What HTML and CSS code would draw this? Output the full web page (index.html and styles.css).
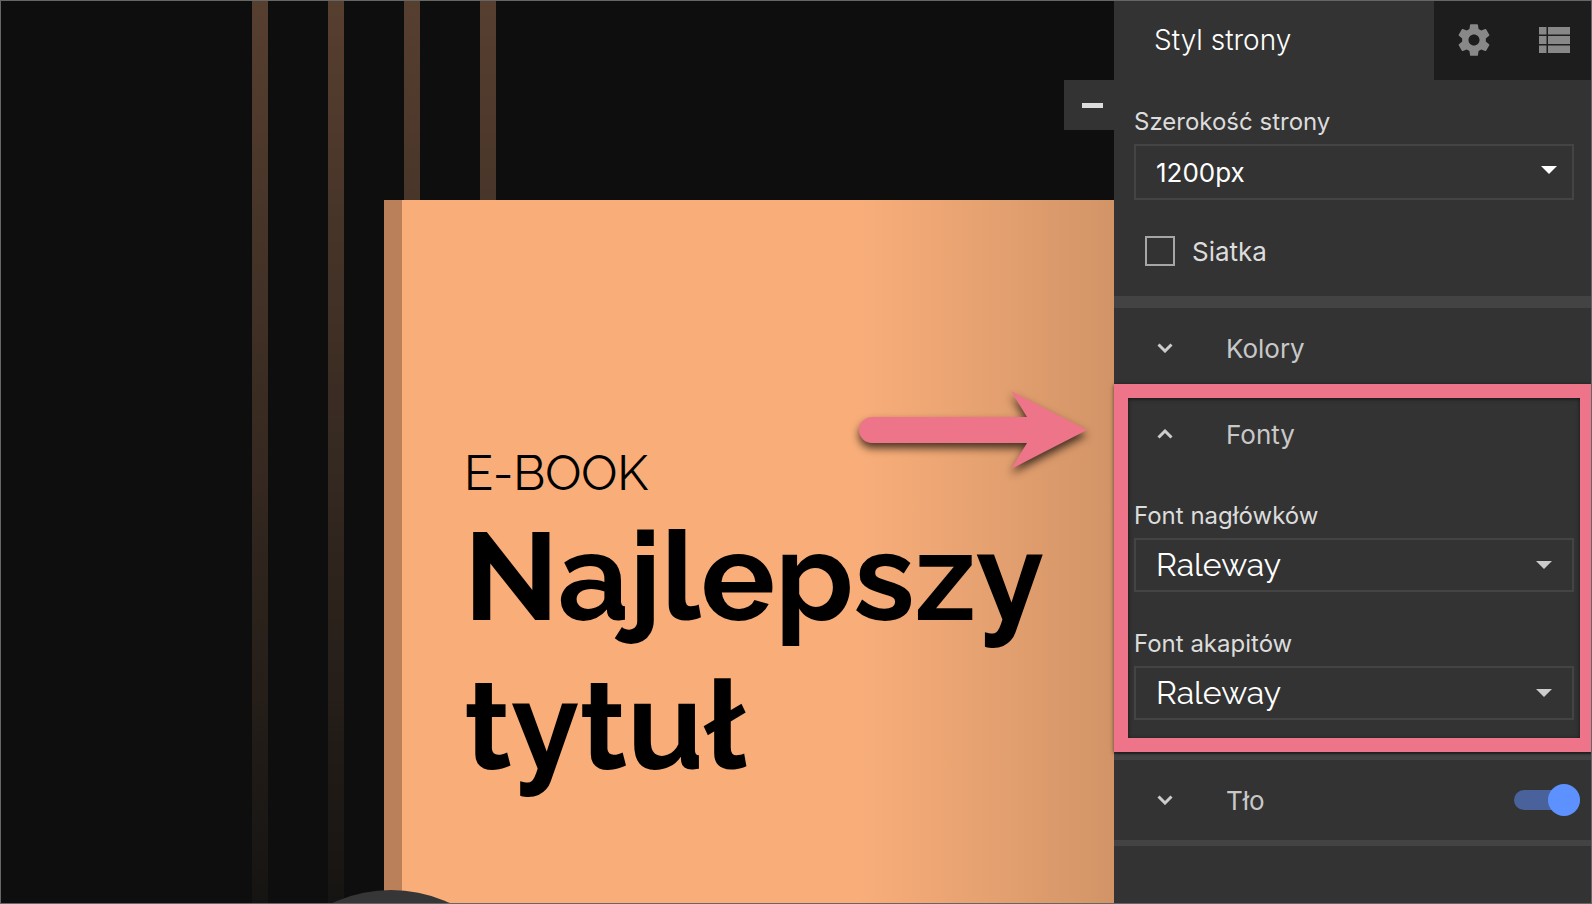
FILE: index.html
```html
<!DOCTYPE html>
<html lang="pl">
<head>
  <meta charset="utf-8">
  <title>Styl strony</title>
  <link rel="stylesheet" href="styles.css">
</head>
<body>
  <div class="editor">
    <main class="canvas">
      <div class="stripes">
        <span></span><span></span><span></span><span></span>
      </div>
      <article class="cover">
        <p class="cover-kind">E-BOOK</p>
        <h1 class="cover-title">Najlepszy tytuł</h1>
      </article>
      <div class="circle"></div>
      <svg class="arrow" width="228" height="78" viewBox="0 0 228 78" aria-hidden="true">
        <path fill="#ee7589" d="M13 26H168L152 0L228 39L152 78L168 52H13A13 13 0 0 1 13 26Z"/>
      </svg>
      <button class="collapse" type="button" aria-label="Zwiń panel"><span></span></button>
    </main>

    <aside class="sidebar">
      <header class="tabs">
        <h2 class="tabs-title">Styl strony</h2>
        <button class="tab" type="button" aria-label="Ustawienia">
          <svg width="38" height="38" viewBox="0 0 24 24" fill="#888">
            <path d="M19.43 12.98c.04-.32.07-.64.07-.98s-.03-.66-.07-.98l2.11-1.65c.19-.15.24-.42.12-.64l-2-3.46c-.12-.22-.39-.3-.61-.22l-2.49 1c-.52-.4-1.08-.73-1.69-.98l-.38-2.65C14.46 2.18 14.25 2 14 2h-4c-.25 0-.46.18-.49.42l-.38 2.65c-.61.25-1.17.59-1.69.98l-2.49-1c-.23-.09-.49 0-.61.22l-2 3.46c-.13.22-.07.49.12.64l2.11 1.65c-.04.32-.07.65-.07.98s.03.66.07.98l-2.11 1.65c-.19.15-.24.42-.12.64l2 3.46c.12.22.39.3.61.22l2.49-1c.52.4 1.08.73 1.69.98l.38 2.65c.03.24.24.42.49.42h4c.25 0 .46-.18.49-.42l.38-2.65c.61-.25 1.17-.59 1.69-.98l2.49 1c.23.09.49 0 .61-.22l2-3.46c.12-.22.07-.49-.12-.64l-2.11-1.65zM12 15.500c-1.930 0-3.500-1.570-3.500-3.500s1.570-3.500 3.500-3.500 3.500 1.570 3.500 3.500-1.570 3.500-3.500 3.500z"/>
          </svg>
        </button>
        <button class="tab tab-list" type="button" aria-label="Lista elementów">
          <svg width="31" height="26" viewBox="0 0 31 26" fill="#888">
            <path d="M0 0h7.500v7.500H0zM9 0h22v7.500H9zM0 9h7.500v8H0zM9 9h22v8H9zM0 18.500h7.500V26H0zM9 18.500h22V26H9z"/>
          </svg>
        </button>
      </header>

      <section class="section section-page">
        <div class="fields">
          <div class="field">
            <label for="width">Szerokość strony</label>
            <div class="select select-width">
              <select id="width"><option>1200px</option></select>
            </div>
          </div>
          <label class="check"><input type="checkbox"> Siatka</label>
        </div>
      </section>

      <section class="section">
        <button class="toggle" type="button">
          <svg width="16" height="10" viewBox="0 0 16 10"><path d="M1.500 1.500L8 8L14.500 1.500"/></svg>
          Kolory
        </button>
      </section>

      <section class="section highlight">
        <button class="toggle" type="button" aria-expanded="true">
          <svg width="16" height="10" viewBox="0 0 16 10"><path d="M1.500 8.500L8 2L14.500 8.500"/></svg>
          Fonty
        </button>
        <div class="fields">
          <div class="field">
            <label for="heading-font">Font nagłówków</label>
            <div class="select select-font">
              <select id="heading-font"><option>Raleway</option></select>
            </div>
          </div>
          <div class="field">
            <label for="text-font">Font akapitów</label>
            <div class="select select-font">
              <select id="text-font"><option>Raleway</option></select>
            </div>
          </div>
        </div>
      </section>

      <section class="section section-row">
        <button class="toggle" type="button">
          <svg width="16" height="10" viewBox="0 0 16 10"><path d="M1.500 1.500L8 8L14.500 1.500"/></svg>
          Tło
        </button>
        <input class="switch" type="checkbox" role="switch" aria-label="Tło" checked>
      </section>
    </aside>
  </div>
</body>
</html>
```

FILE: styles.css
```css
* {
  box-sizing: border-box;
}

body {
  margin: 0;
  font-family: Inter, "Liberation Sans", sans-serif;
  background: #0e0e0e;
}

button,
select,
input {
  margin: 0;
  font: inherit;
  color: inherit;
}

button {
  padding: 0;
  border: 0;
  background: none;
}

.editor {
  display: flex;
  height: 100vh;
  border: 1px solid #666;
  overflow: hidden;
}

/* canvas */
.canvas {
  position: relative;
  flex: 1;
  display: flex;
  padding: 199px 0 0 383px;
}

.stripes {
  position: absolute;
  top: 0;
  bottom: 0;
  left: 251px;
  display: flex;
  gap: 60px;
}

.stripes span {
  width: 16px;
  background: linear-gradient(#573f30, #161412);
}

.cover {
  position: relative;
  flex: 1;
  padding: 245px 40px 0 62px;
  border-left: 18px solid #b9805a;
  background: linear-gradient(to right, #f9ae7a 64%, #d29467);
  color: #000;
  font-family: Raleway, Lato, sans-serif;
}

.cover-kind {
  margin: 0;
  font-size: 48px;
  line-height: 57px;
}

.cover-title {
  margin: 0;
  font-size: 124px;
  font-weight: 700;
  line-height: 149px;
}

.circle {
  position: absolute;
  left: 250px;
  bottom: -267px;
  width: 280px;
  height: 280px;
  border-radius: 50%;
  background: #363636;
}

.arrow {
  position: absolute;
  top: 390px;
  right: 27px;
  overflow: visible;
  filter: drop-shadow(0 5px 4px rgba(0, 0, 0, 0.7));
}

.collapse {
  position: absolute;
  top: 79px;
  right: 0;
  display: flex;
  align-items: center;
  justify-content: center;
  width: 50px;
  height: 50px;
  padding-left: 6px;
  background: #333;
}

.collapse span {
  width: 21px;
  height: 5px;
  background: #dcdcdc;
}

/* sidebar */
.sidebar {
  position: relative;
  width: 477px;
  background: #333;
  color: #dcdcdc;
}

.tabs {
  display: flex;
  height: 79px;
}

.tabs-title {
  flex: 1;
  margin: 0;
  padding-left: 40px;
  color: #fff;
  font-size: 28px;
  font-weight: 300;
  line-height: 79px;
}

.tab {
  display: flex;
  align-items: center;
  justify-content: center;
  width: 80px;
  padding-bottom: 2px;
  background: #1d1d1d;
}

.tab-list {
  width: 77px;
  padding-left: 3px;
}

.section {
  border-bottom: 6px solid #434343;
}

.fields {
  display: flex;
  flex-direction: column;
  gap: 34px;
  padding: 24px 17px 34px 20px;
}

.section-page {
  border-bottom-width: 12px;
}

.section-page .fields {
  padding-bottom: 28px;
}

.field {
  display: flex;
  flex-direction: column;
  gap: 4px;
}

.field label {
  font-size: 24px;
  line-height: 36px;
}

.select {
  position: relative;
  color: #fff;
}

.select select {
  display: block;
  width: 100%;
  height: 54px;
  padding: 0 20px;
  border: 2px solid #444;
  background: #333;
  appearance: none;
}

.select::after {
  content: "";
  position: absolute;
  top: 23px;
  right: 22px;
  border: 8px solid transparent;
  border-top-color: #ccc;
  border-bottom: 0;
  pointer-events: none;
}

.select-width select {
  height: 56px;
  font-size: 26px;
}

.select-width::after {
  top: 22px;
  right: 17px;
  border-top-color: #fff;
}

.select-font select {
  padding-bottom: 2px;
  font-family: Raleway, Lato, sans-serif;
  font-size: 32px;
}

.check {
  display: flex;
  align-items: center;
  gap: 17px;
  height: 34px;
  padding-left: 11px;
  font-size: 26px;
}

.check input {
  width: 30px;
  height: 30px;
  border: 2px solid #a6a6a6;
  appearance: none;
}

.toggle {
  display: flex;
  align-items: center;
  gap: 53px;
  width: 100%;
  height: 80px;
  padding-left: 43px;
  color: #c8c8c8;
  font-size: 26px;
}

.toggle path {
  fill: none;
  stroke: #ccc;
  stroke-width: 3;
}

.highlight {
  position: relative;
}

/* frame lies over the section and its neighbours */
.highlight::after {
  content: "";
  position: absolute;
  inset: -10px -3px 2px 0;
  border: 14px solid #ee7589;
  box-shadow: 0 1px 4px rgba(0, 0, 0, 0.6), inset 0 1px 4px rgba(0, 0, 0, 0.6);
  pointer-events: none;
}

.section-row {
  display: flex;
  align-items: center;
  padding-right: 11px;
}

.switch {
  display: flex;
  align-items: center;
  justify-content: flex-end;
  width: 66px;
  height: 20px;
  border-radius: 10px;
  background: #4a629b;
  appearance: none;
  flex: none;
}

.switch::before {
  content: "";
  width: 32px;
  height: 32px;
  border-radius: 50%;
  background: #5c91ff;
  flex: none;
}
```
